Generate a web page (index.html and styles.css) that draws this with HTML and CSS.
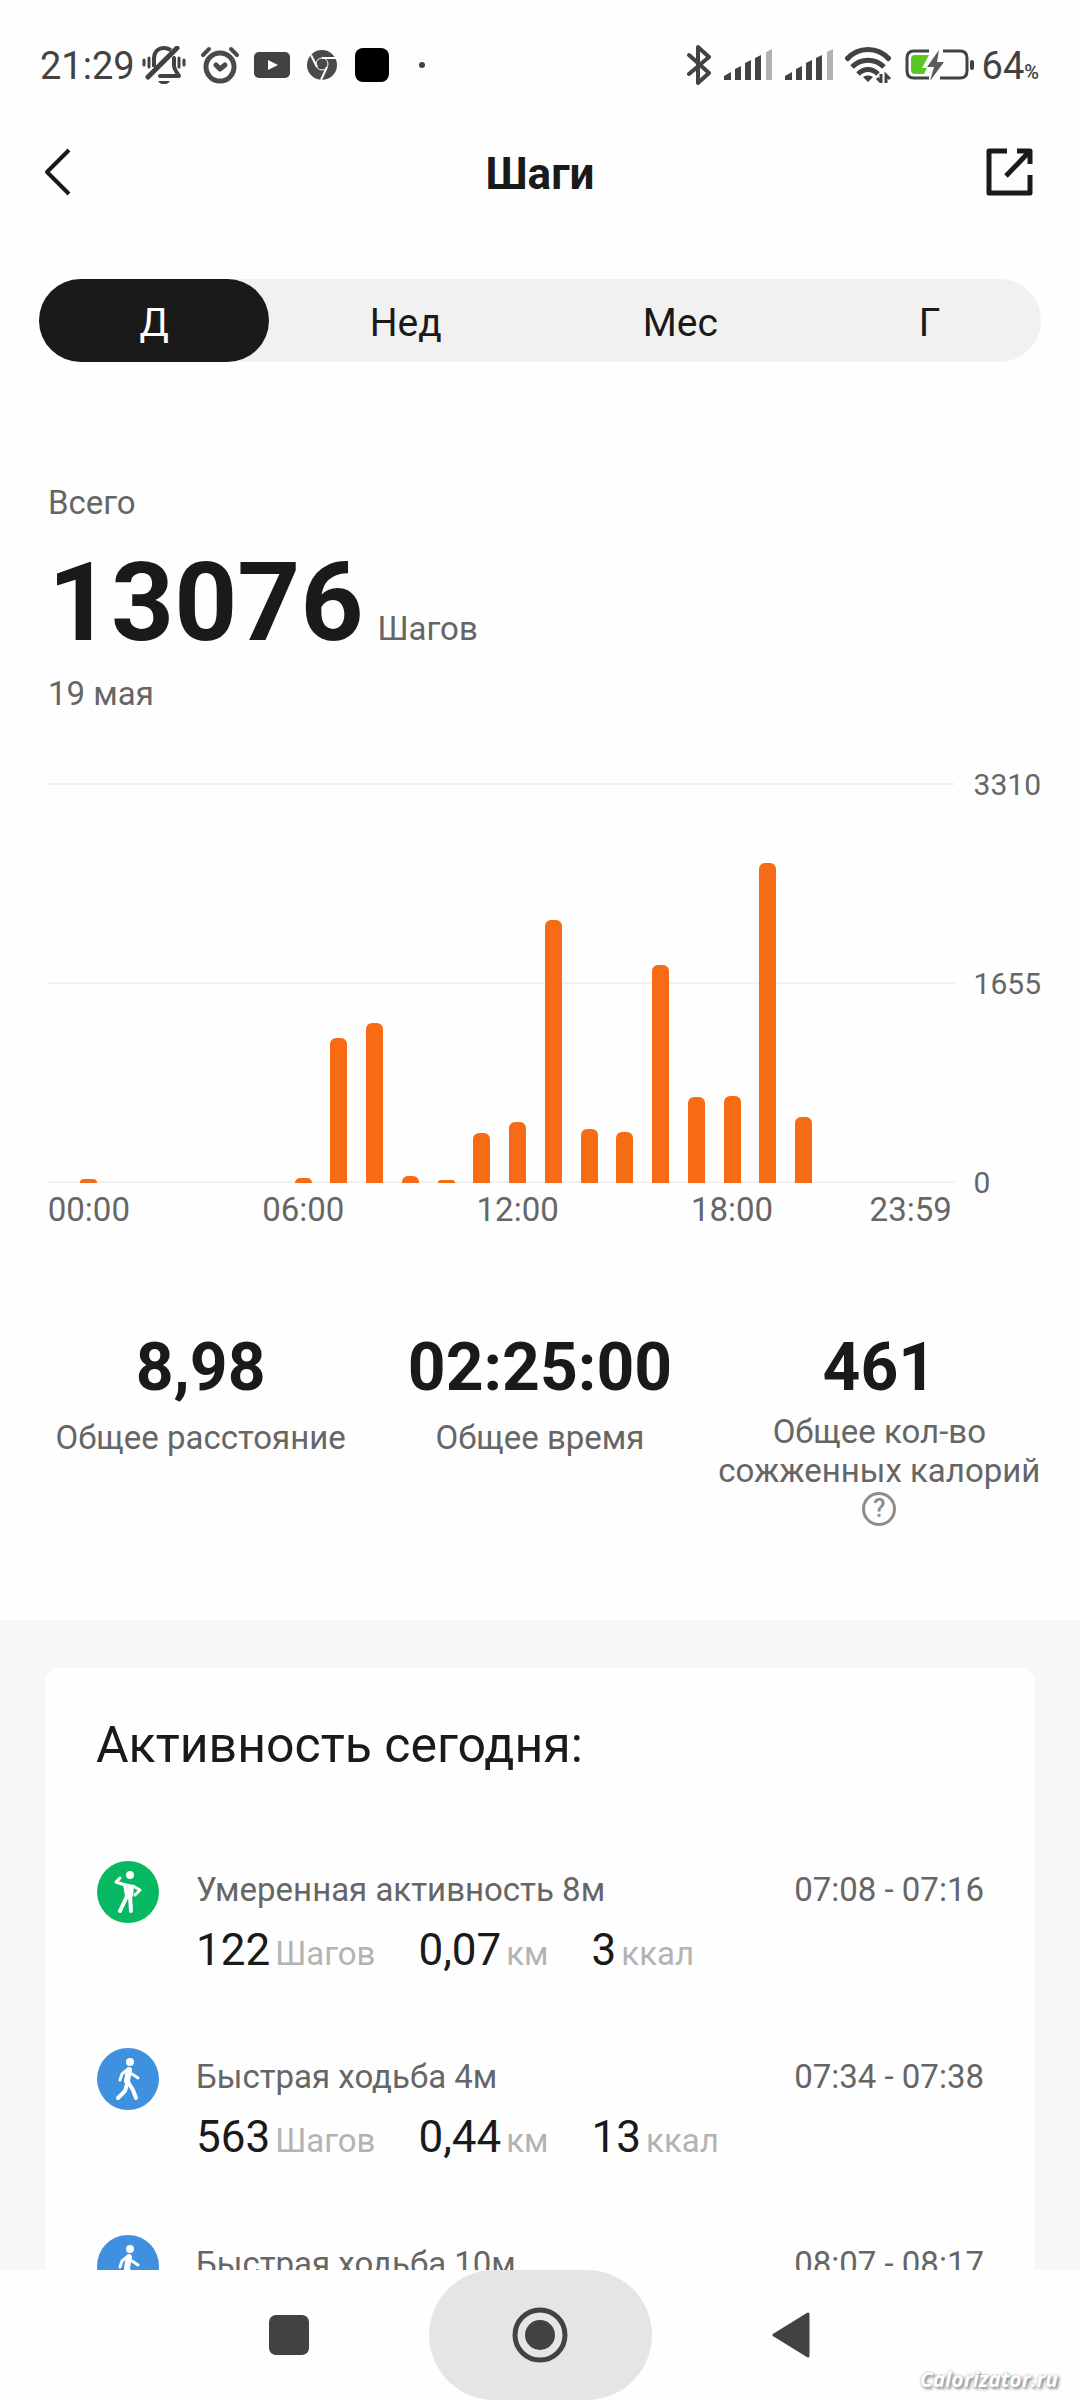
FILE: index.html
```html
<!DOCTYPE html>
<html lang="ru">
  <head>
    <meta charset="UTF-8" />
    <meta name="viewport" content="width=device-width, initial-scale=1.0" />
    <title>Шаги</title>
    <link rel="stylesheet" href="styles.css">
  </head>
  <body>
    <div class="status-bar">
      <span class="clock">21:29</span>
      <svg class="icon-mute" width="44" height="38" viewBox="0 0 44 38" fill="none" stroke="#424242" stroke-width="3" stroke-linecap="round">
        <path d="M12 21V13C12 6 16 2 22 2c3 0 5 1 7 2" stroke-width="4" stroke-linecap="butt" />
        <path d="M32 12v8c0 4 3 6 5 10H18" stroke-width="4" stroke-linejoin="round" />
        <path d="M6 31L35 2" stroke-width="5" />
        <path d="M2 14v5M7 12v9M37 12v9M42 14v5" />
        <path d="M16 35h12c-2 3-4 3-6 3s-4 0-6-3z" fill="#424242" stroke="none" />
      </svg>
      <svg class="icon-alarm" width="40" height="38" viewBox="0 0 40 38" fill="none" stroke="#4a4a4a" stroke-width="5" stroke-linecap="round" stroke-linejoin="round">
        <circle cx="20" cy="21" r="14" />
        <path d="M16 19l4 4 5-4" />
        <path d="M3 9l6-6M31 3l6 6" stroke-width="4" />
      </svg>
      <svg class="icon-video" width="36" height="28" viewBox="0 0 36 28">
        <rect y="1" width="36" height="26" rx="5" fill="#424242" />
        <path d="M14 9l10 5-10 5z" fill="#fff" />
      </svg>
      <svg class="icon-browser" width="30" height="32" viewBox="0 0 30 32" fill="none" stroke="#fff" stroke-width="1">
        <circle cx="15" cy="16" r="15" fill="#4a4a4a" stroke="none" />
        <circle cx="15" cy="15" r="6" />
        <path d="M15 9h14M10 18L4 6M20 18l-6 13" stroke-width="2" />
      </svg>
      <span class="app-square"></span>
      <span class="more-dot"></span>

      <svg class="icon-bluetooth" width="24" height="40" viewBox="0 0 24 40" fill="none" stroke="#424242" stroke-width="4" stroke-linecap="round" stroke-linejoin="round">
        <path d="M2 10l20 18-11 10V2l11 10L2 29" />
      </svg>
      <svg class="icon-signal" width="48" height="32" viewBox="0 0 48 32" fill="#424242">
        <path d="M0 31v-4l7-4v8zM11 31V20l6-3v14zM21 31V14l6-3v20zM31 31V9l6-3v25z" />
        <path d="M42 31V3l6-3v31z" fill="#b3b3b3" />
      </svg>
      <svg class="icon-signal" width="48" height="32" viewBox="0 0 48 32" fill="#424242">
        <path d="M0 31v-4l7-4v8zM11 31V20l6-3v14zM21 31V14l6-3v20zM31 31V9l6-3v25z" />
        <path d="M42 31V3l6-3v31z" fill="#b3b3b3" />
      </svg>
      <svg class="icon-wifi" width="46" height="36" viewBox="0 0 46 36" fill="none" stroke="#424242" stroke-width="5">
        <path d="M1 13c12-14 32-14 44 0M7 20c9-9 23-9 32 0M13 27c6-6 14-6 20 0" />
        <path d="M18 30c3-2 7-2 10 0l-5 5z" fill="#424242" stroke="none" />
        <path d="M32 31l4 4v-8M41 36v-8l4 4" stroke-width="3" />
      </svg>
      <svg class="icon-battery" width="70" height="34" viewBox="0 0 70 34">
        <path d="M24 3H9Q2 3 2 10v13q0 7 7 7h15M38 3h17q7 0 7 7v13q0 7-7 7H35" fill="none" stroke="#424242" stroke-width="3" />
        <path d="M24 7H10Q6 7 6 11v11q0 4 4 4h9l3-6h-5z" fill="#5ac725" />
        <path d="M34 2L22 19h7l-4 14 14-19h-7z" fill="#5a5a60" />
        <rect x="65" y="12" width="4" height="10" rx="2" fill="#424242" />
      </svg>
      <span class="charge">64<small>%</small></span>
    </div>

    <header class="header">
      <button class="icon-button" aria-label="Назад">
        <svg width="28" height="48" viewBox="0 0 28 48" fill="none" stroke="#1a1a1a" stroke-width="4" stroke-linejoin="round">
          <path d="M25 2L3 24l22 22" />
        </svg>
      </button>
      <h1>Шаги</h1>
      <button class="icon-button" aria-label="Поделиться">
        <svg width="48" height="48" viewBox="0 0 48 48" fill="none" stroke="#1a1a1a" stroke-width="5" stroke-linejoin="round">
          <path d="M21 3H3v42h41V27" />
          <path d="M31 3h13v13M44 3L20 28" />
        </svg>
      </button>
    </header>

    <nav class="tabs">
      <button class="tab active">Д</button>
      <button class="tab">Нед</button>
      <button class="tab">Мес</button>
      <button class="tab">Г</button>
    </nav>

    <section class="total">
      <p>Всего</p>
      <p class="total-row"><strong>13076</strong><span>Шагов</span></p>
      <p>19 мая</p>
    </section>

    <section class="chart">
      <div class="plot" id="plot"></div>
      <div class="y-axis">
        <span>3310</span>
        <span>1655</span>
        <span>0</span>
      </div>
      <div class="x-axis" id="x-axis"></div>
    </section>

    <section class="stats">
      <div class="stat">
        <strong>8,98</strong>
        <span class="stat-label">Общее расстояние</span>
      </div>
      <div class="stat">
        <strong>02:25:00</strong>
        <span class="stat-label">Общее время</span>
      </div>
      <div class="stat">
        <strong>461</strong>
        <span class="stat-label wrapped">Общее кол-во сожженных калорий</span>
        <button class="help" aria-label="Справка">?</button>
      </div>
    </section>

    <section class="activity">
      <div class="card">
        <h2>Активность сегодня:</h2>
        <article class="row">
          <svg class="badge" viewBox="0 0 62 62" fill="none" stroke="#fff" stroke-width="4" stroke-linecap="round" stroke-linejoin="round">
            <circle cx="31" cy="31" r="31" fill="#07b863" stroke="none" />
            <circle cx="33" cy="14" r="4" fill="#fff" stroke="none" />
            <path d="M23 17l-4 4 9 3M36 25l7 4-5 5" stroke-width="3" />
            <path d="M27 23l9 2-1 10h-6z" fill="#fff" stroke-width="2" />
            <path d="M30 35l-7 15M33 35l1 15" />
          </svg>
          <div class="details">
            <div class="row-head"><span>Умеренная активность 8м</span><time>07:08 - 07:16</time></div>
            <div class="values">
              <span><b>122</b>Шагов</span>
              <span><b>0,07</b>км</span>
              <span><b>3</b>ккал</span>
            </div>
          </div>
        </article>
        <article class="row">
          <svg class="badge" viewBox="0 0 62 62" fill="none" stroke="#fff" stroke-width="4" stroke-linecap="round" stroke-linejoin="round">
            <circle cx="31" cy="31" r="31" fill="#4090e0" stroke="none" />
            <circle cx="33" cy="14" r="4" fill="#fff" stroke="none" />
            <path d="M30 22l-5 4-2 6M35 26l6 4" stroke-width="3" />
            <path d="M32 22l-2 11" stroke-width="6" />
            <path d="M30 36l-2 7-7 7M31 34l5 8 3 8" />
          </svg>
          <div class="details">
            <div class="row-head"><span>Быстрая ходьба 4м</span><time>07:34 - 07:38</time></div>
            <div class="values">
              <span><b>563</b>Шагов</span>
              <span><b>0,44</b>км</span>
              <span><b>13</b>ккал</span>
            </div>
          </div>
        </article>
        <article class="row">
          <svg class="badge" viewBox="0 0 62 62" fill="none" stroke="#fff" stroke-width="4" stroke-linecap="round" stroke-linejoin="round">
            <circle cx="31" cy="31" r="31" fill="#4090e0" stroke="none" />
            <circle cx="33" cy="14" r="4" fill="#fff" stroke="none" />
            <path d="M30 22l-5 4-2 6M35 26l6 4" stroke-width="3" />
            <path d="M32 22l-2 11" stroke-width="6" />
            <path d="M30 36l-2 7-7 7M31 34l5 8 3 8" />
          </svg>
          <div class="details">
            <div class="row-head"><span>Быстрая ходьба 10м</span><time>08:07 - 08:17</time></div>
          </div>
        </article>
      </div>
    </section>

    <footer class="system-nav">
      <button aria-label="Недавние">
        <svg width="40" height="40" viewBox="0 0 40 40"><rect width="40" height="40" rx="7" fill="#424242" /></svg>
      </button>
      <button class="pressed" aria-label="Домой">
        <svg width="56" height="56" viewBox="0 0 56 56">
          <circle cx="28" cy="28" r="25" fill="none" stroke="#424242" stroke-width="5" />
          <circle cx="28" cy="28" r="15" fill="#424242" />
        </svg>
      </button>
      <button aria-label="Назад">
        <svg width="38" height="46" viewBox="0 0 38 46"><path d="M36 2v42L2 23z" fill="#424242" stroke="#424242" stroke-width="3" stroke-linejoin="round" /></svg>
      </button>
      <span class="watermark">Calorizator.ru</span>
    </footer>

    <script>
      const maxSteps = 3310;
      const steps = [
        30, 0, 0, 0, 0, 0, 38, 1200, 1328, 58, 26, 410,
        508, 2180, 444, 424, 1808, 712, 720, 2644, 546, 0, 0, 0,
      ];
      const hourLabels = { 0: "00:00", 6: "06:00", 12: "12:00", 18: "18:00", 23: "23:59" };

      const plot = document.getElementById("plot");
      const xAxis = document.getElementById("x-axis");

      steps.forEach((value, hour) => {
        const bar = document.createElement("div");
        bar.className = "bar";
        bar.style.height = `${(value / maxSteps) * 100}%`;
        plot.appendChild(bar);

        const label = document.createElement("span");
        label.textContent = hourLabels[hour] || "";
        xAxis.appendChild(label);
      });
    </script>
  </body>
</html>
```
FILE: styles.css
```css
* {
  box-sizing: border-box;
}

body {
  display: flex;
  flex-direction: column;
  height: 100vh;
  margin: 0;
  overflow: hidden;
  background-color: #fefefe;
  color: #1a1a1a;
  font-family: Roboto, "Liberation Sans", sans-serif;
  font-size: 33px;
  line-height: 40px;
}

h1,
h2,
p {
  margin: 0;
}

button {
  border: 0;
  padding: 0;
  background: none;
  color: inherit;
  font: inherit;
}

svg {
  display: block;
  flex-shrink: 0;
}

body > * {
  flex-shrink: 0;
}

.status-bar {
  display: flex;
  align-items: center;
  height: 130px;
  padding: 0 41px 0 40px;
  color: #424242;
  font-size: 38px;
}

.clock,
.charge {
  padding-top: 2px;
}

.icon-mute {
  margin-left: 7px;
}

.icon-alarm {
  margin-left: 14px;
}

.icon-video {
  margin-left: 14px;
}

.icon-browser {
  margin-left: 17px;
}

.app-square {
  width: 34px;
  height: 34px;
  margin-left: 18px;
  border-radius: 8px;
  background-color: #000;
}

.more-dot {
  width: 6px;
  height: 6px;
  margin: 0 auto 0 30px;
  border-radius: 50%;
  background-color: #424242;
}

.icon-signal {
  margin-left: 13px;
}

.icon-wifi {
  margin-left: 12px;
}

.icon-battery {
  margin: 0 7px 0 14px;
}

.charge {
  line-height: 38px;
}

.charge small {
  font-size: 20px;
  font-weight: 500;
  line-height: 20px;
}

.header {
  display: flex;
  align-items: center;
  justify-content: space-between;
  height: 83px;
  padding: 0 44px;
}

.header h1 {
  padding-top: 4px;
  font-size: 44px;
  font-weight: 700;
}

.icon-button {
  display: flex;
  width: 50px;
}

.tabs {
  display: flex;
  margin: 66px 39px 0;
  border-radius: 42px;
  background-color: #f1f1f1;
}

.tab {
  flex: 1 1 auto;
  height: 83px;
  padding-top: 4px;
  border-radius: 42px;
  font-size: 39px;
}

.tab.active {
  background-color: #1a1a1a;
  color: #fff;
}

.total {
  margin: 121px 48px 0;
  color: #666;
}

.total-row {
  display: flex;
  align-items: baseline;
  gap: 14px;
  margin: 25px 0 16px;
}

.total-row strong {
  color: #1a1a1a;
  font-size: 110px;
  line-height: 110px;
}

.chart {
  display: grid;
  grid-template-columns: 1fr auto;
  column-gap: 19px;
  margin: 69px 39px 0 47px;
  color: #666;
}

.plot,
.x-axis {
  display: grid;
  grid-template-columns: repeat(24, minmax(0, 1fr));
  justify-items: center;
  padding: 0 26px 0 24px;
}

.plot {
  height: 400px;
  align-items: end;
  background: linear-gradient(#f1f1f1, #f1f1f1) 0 0 / 100% 2px no-repeat,
    linear-gradient(#f1f1f1, #f1f1f1) 0 50% / 100% 2px no-repeat,
    linear-gradient(#f1f1f1, #f1f1f1) 0 100% / 100% 2px no-repeat;
}

.bar {
  width: 17px;
  border-radius: 6px 6px 0 0;
  background-color: #f76b15;
}

.y-axis {
  display: flex;
  flex-direction: column;
  justify-content: space-between;
  margin: -14px 0 -16px;
  font-size: 30px;
  line-height: 32px;
}

.x-axis {
  height: 40px;
  margin-top: 7px;
}

.stats {
  display: grid;
  grid-template-columns: repeat(3, 1fr);
  margin: 105px 31px 0;
  text-align: center;
}

.stat strong {
  display: block;
  margin-bottom: 11px;
  font-size: 66px;
  line-height: 66px;
}

.stat-label {
  display: block;
  color: #666;
  line-height: 51px;
}

.stat-label.wrapped {
  line-height: 39px;
}

.help {
  display: block;
  width: 34px;
  height: 34px;
  margin: 2px auto;
  border: 3px solid #8c8c8c;
  border-radius: 50%;
  color: #8c8c8c;
  font-size: 25px;
  font-weight: 500;
  line-height: 28px;
}

.activity {
  display: flex;
  flex: 1 1 0;
  min-height: 0;
  margin-top: 92px;
  padding: 48px 45px 0;
  overflow: hidden;
  background-color: #f7f7f7;
}

.card {
  flex: 1;
  padding: 47px 51px 0;
  border-radius: 14px 14px 0 0;
  background-color: #fefefe;
}

.card h2 {
  margin-bottom: 86px;
  font-size: 50px;
  font-weight: 400;
  line-height: 60px;
}

.row {
  display: flex;
  gap: 36px;
  height: 114px;
  margin-bottom: 73px;
  color: #666;
}

.badge {
  width: 64px;
  height: 62px;
}

.details {
  flex: 1;
  padding-top: 9px;
}

.row-head {
  display: flex;
  justify-content: space-between;
}

.values {
  display: flex;
  gap: 43px;
  margin-top: 15px;
  color: #b3b3b3;
  line-height: 50px;
}

.values b {
  margin-right: 5px;
  color: #1a1a1a;
  font-size: 44px;
  font-weight: 400;
}

.system-nav {
  position: relative;
  display: flex;
  justify-content: center;
  gap: 28px;
  background-color: #fefefe;
}

.system-nav button {
  display: flex;
  align-items: center;
  justify-content: center;
  width: 223px;
  height: 130px;
  border-radius: 65px;
}

.system-nav .pressed {
  background-color: #e5e5e5;
}

.watermark {
  position: absolute;
  right: 22px;
  bottom: 7px;
  color: #fff;
  font-family: "Open Sans", sans-serif;
  font-size: 21px;
  font-style: italic;
  font-weight: 700;
  line-height: 28px;
  text-shadow: 0 0 2px #999, 2px 2px 3px #888;
}
```
